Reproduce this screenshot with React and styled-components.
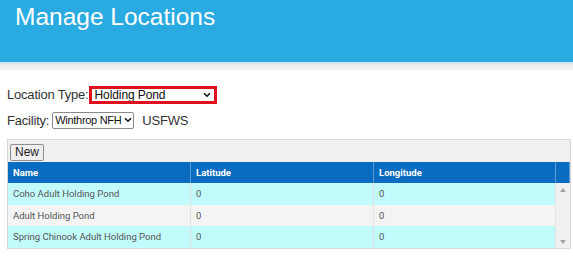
import { Fragment } from "react";
import styled, { createGlobalStyle } from "styled-components";

const Global = createGlobalStyle`
  body {
    margin: 0;
    background: #fff;
    font-family: "Liberation Sans", Arial, sans-serif;
  }
`;

const Banner = styled.div`
  height: 64px;
  background: #29abe2;
  border-bottom: 2px solid #cfe6f3;
  box-sizing: border-box;
`;
const Title = styled.h1`
  margin: 0;
  padding: 3px 0 0 15px;
  font-size: 24.5px;
  font-weight: normal;
  color: #fff;
  line-height: 28px;
`;
const Band = styled.div`
  height: 6px;
  background: linear-gradient(#e9eaec, #f3f2f1);
`;

const Body = styled.div`
  padding: 14px 2px 0 7px;
`;
const Row = styled.div`
  display: flex;
  align-items: center;
  gap: ${(p) => p.gap || 0}px;
  height: ${(p) => p.h}px;
  font-size: 13px;
  color: #333;
  letter-spacing: -0.2px;
  white-space: nowrap;
`;
const Select = styled.div`
  display: flex;
  align-items: center;
  justify-content: space-between;
  gap: 3px;
  box-sizing: border-box;
  width: ${(p) => p.w}px;
  height: ${(p) => (p.hot ? 18 : 17)}px;
  padding: 0 3px 0 ${(p) => (p.hot ? 3 : 2)}px;
  border: ${(p) => (p.hot ? "3px solid #e0101e" : "1px solid #8a8a8a")};
  border-radius: ${(p) => (p.hot ? 0 : 2)}px;
  background: #fff;
  font-size: ${(p) => (p.hot ? 12 : 11)}px;
  color: #111;
  letter-spacing: ${(p) => (p.hot ? -0.1 : -0.3)}px;
  white-space: nowrap;
  overflow: hidden;
  svg {
    flex-shrink: 0;
  }
`;
const Chev = () => (
  <svg width="8" height="6" viewBox="0 0 8 6">
    <path d="M1 1.2 L4 4.2 L7 1.2" fill="none" stroke="#111" strokeWidth="1.6" />
  </svg>
);

const Grid = styled.div`
  margin-top: 4px;
  width: 564px;
  border: 1px solid #d8d8d8;
  background: #f0f0f0;
  box-sizing: border-box;
`;
const Toolbar = styled.div`
  height: 22px;
  padding: 2px 0 0 2px;
  box-sizing: border-box;
`;
const Button = styled.button`
  height: 17px;
  width: 34px;
  padding: 0;
  font-family: inherit;
  font-size: 12px;
  color: #222;
  background: #efefef;
  border: 1px solid #8f8f8f;
  border-radius: 2px;
`;
const Table = styled.div`
  display: grid;
  grid-template-columns: 183px 183px 182px 14px;
  font-family: Roboto, "Liberation Sans", sans-serif;
  font-size: 9.5px;
`;
const Head = styled.div`
  height: 21px;
  display: flex;
  align-items: center;
  padding-left: 5px;
  background: #0a6cc0;
  color: #fff;
  font-weight: bold;
  border-right: 1px solid #5c9ad4;
`;
const Cell = styled.div`
  height: 21.5px;
  display: flex;
  align-items: center;
  padding-left: 5px;
  background: ${(p) => (p.alt ? "#f4f4f4" : "#c2fbfb")};
  color: #555;
  border-right: 1px solid #e2e2e2;
`;
const Scroll = styled.div`
  grid-row: 2 / span 3;
  grid-column: 4;
  background: #f1f1f1;
  display: flex;
  flex-direction: column;
  justify-content: space-between;
  align-items: center;
  padding: 5px 0 4px;
  box-sizing: border-box;
`;
const Arrow = ({ up }) => (
  <svg width="6" height="4" viewBox="0 0 6 4">
    <path d={up ? "M0 4 L3 0 L6 4 Z" : "M0 0 L3 4 L6 0 Z"} fill="#a3a3a3" />
  </svg>
);

const rows = [
  "Coho Adult Holding Pond",
  "Adult Holding Pond",
  "Spring Chinook Adult Holding Pond",
];

export default function App() {
  return (
    <>
      <Global />
      <Banner>
        <Title>Manage Locations</Title>
      </Banner>
      <Band />
      <Body>
        <Row h={21}>
          Location Type:
          <Select hot w={128}>
            Holding Pond <Chev />
          </Select>
        </Row>
        <Row h={30} gap={3}>
          Facility:
          <Select w={82}>
            Winthrop NFH <Chev />
          </Select>
          <span style={{ marginLeft: 5 }}>USFWS</span>
        </Row>
        <Grid>
          <Toolbar>
            <Button>New</Button>
          </Toolbar>
          <Table>
            <Head>Name</Head>
            <Head>Latitude</Head>
            <Head>Longitude</Head>
            <Head />
            <Scroll>
              <Arrow up />
              <Arrow />
            </Scroll>
            {rows.map((r, i) => (
              <Fragment key={r}>
                <Cell alt={i === 1}>{r}</Cell>
                <Cell alt={i === 1}>0</Cell>
                <Cell alt={i === 1}>0</Cell>
              </Fragment>
            ))}
          </Table>
        </Grid>
      </Body>
    </>
  );
}
